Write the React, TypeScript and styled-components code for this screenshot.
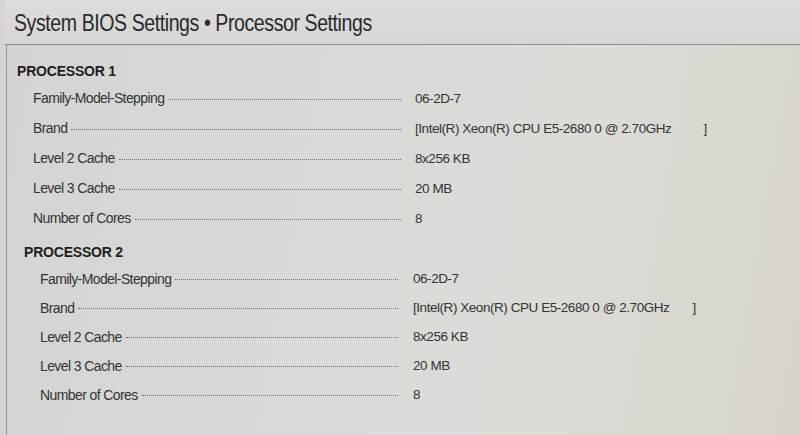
import React from "react";
import styled, { createGlobalStyle } from "styled-components";

const Global = createGlobalStyle`
  html, body { margin: 0; padding: 0; }
  body {
    width: 800px;
    height: 435px;
    overflow: hidden;
    font-family: "Liberation Sans", Arial, sans-serif;
  }
`;

const Screen = styled.div`
  width: 800px;
  height: 435px;
  box-sizing: border-box;
  display: flex;
  flex-direction: column;
  background: linear-gradient(100deg, #d3d4d3 0%, #d9dad8 40%, #dcdbd6 70%, #d8d4cb 100%);
  color: #2c2c2c;
  overflow: hidden;
`;

const Header = styled.header`
  height: 45px;
  box-sizing: border-box;
  margin-left: 5px;
  padding-left: 9px;
  padding-top: 2px;
  display: flex;
  align-items: center;
  border-bottom: 1px solid #8c8c8e;
  background: linear-gradient(180deg, #dcdcdc 0%, #d6d7d6 100%);
`;

const Title = styled.h1`
  margin: 0;
  font-size: 23px;
  font-weight: 400;
  letter-spacing: -0.5px;
  color: #2a2a2a;
  white-space: nowrap;
  transform: scaleX(0.85);
  transform-origin: left center;
`;

const Panel = styled.main`
  flex: 1;
  margin-left: 6px;
  border-left: 1px solid #959595;
  display: flex;
  flex-direction: column;
  padding-top: 14px;
`;

const Section = styled.section<{ $indent: number; $gap: number }>`
  display: flex;
  flex-direction: column;
  padding-left: ${(p) => p.$indent}px;
  margin-top: ${(p) => p.$gap}px;
`;

const Heading = styled.h2`
  margin: 0;
  height: 24px;
  display: flex;
  align-items: center;
  font-size: 14px;
  font-weight: 700;
  letter-spacing: -0.2px;
  color: #1e1e1e;
`;

const Row = styled.div<{ $h: number; $labelW: number; $valueGap: number }>`
  height: ${(p) => p.$h}px;
  display: grid;
  grid-template-columns: ${(p) => p.$labelW}px 1fr;
  column-gap: ${(p) => p.$valueGap}px;
  align-items: center;
  padding-left: 16px;
`;

const LabelCell = styled.div`
  display: flex;
  align-items: center;
  min-width: 0;
`;

const Label = styled.span`
  font-size: 14px;
  letter-spacing: -0.6px;
  color: #333;
  white-space: nowrap;
`;

const Leader = styled.span`
  flex: 1;
  margin-left: 4px;
  margin-top: 2px;
  border-bottom: 1px dotted #6f6f6f;
`;

const Value = styled.span`
  font-size: 13.5px;
  letter-spacing: -0.45px;
  color: #333;
  white-space: nowrap;
  display: flex;
`;

const Bracket = styled.span<{ $space: number }>`
  margin-left: ${(p) => p.$space}px;
`;

type Item = { label: string; value: string; bracket?: boolean };

const items: Item[] = [
  { label: "Family-Model-Stepping", value: "06-2D-7" },
  { label: "Brand", value: "[Intel(R) Xeon(R) CPU E5-2680 0 @ 2.70GHz", bracket: true },
  { label: "Level 2 Cache", value: "8x256 KB" },
  { label: "Level 3 Cache", value: "20 MB" },
  { label: "Number of Cores", value: "8" },
];

type Proc = {
  name: string;
  indent: number;
  gap: number;
  rowH: number;
  labelW: number;
  valueGap: number;
  bracketSpace: number;
};

const procs: Proc[] = [
  { name: "PROCESSOR 1", indent: 10, gap: 0, rowH: 30, labelW: 368, valueGap: 14, bracketSpace: 32 },
  { name: "PROCESSOR 2", indent: 17, gap: 7, rowH: 29, labelW: 358, valueGap: 15, bracketSpace: 23 },
];

export default function App() {
  return (
    <>
      <Global />
      <Screen>
        <Header>
          <Title>System BIOS Settings • Processor Settings</Title>
        </Header>
        <Panel>
          {procs.map((p) => (
            <Section key={p.name} $indent={p.indent} $gap={p.gap}>
              <Heading>{p.name}</Heading>
              {items.map((it) => (
                <Row key={it.label} $h={p.rowH} $labelW={p.labelW} $valueGap={p.valueGap}>
                  <LabelCell>
                    <Label>{it.label}</Label>
                    <Leader />
                  </LabelCell>
                  <Value>
                    {it.value}
                    {it.bracket && <Bracket $space={p.bracketSpace}>]</Bracket>}
                  </Value>
                </Row>
              ))}
            </Section>
          ))}
        </Panel>
      </Screen>
    </>
  );
}
